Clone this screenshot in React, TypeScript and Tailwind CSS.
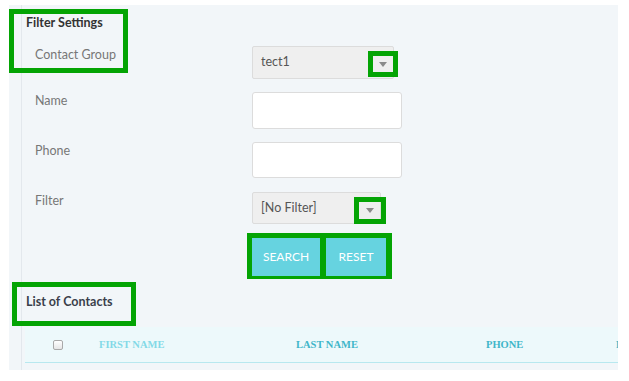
import React from 'react';

const GREEN = 'border-[#04a404]';

const Arrow: React.FC = () => (
  <span className="block w-0 h-0 border-l-[4px] border-r-[4px] border-t-[5px] border-l-transparent border-r-transparent border-t-[#8a8a8a]" />
);

const App: React.FC = () => {
  return (
    <div className="w-[629px] h-[381px] bg-white pt-[5px] pl-[9px] overflow-hidden" style={{ fontFamily: 'Lato, "Open Sans", sans-serif' }}>
      <div className="relative w-[609px] h-[365px] bg-[#f2f6f9] overflow-hidden">
        <div className="ml-[12px] h-full border-l border-[#e3e8ed]">
          {/* Filter settings */}
          <div className="pt-[10px] pl-[4px] text-[12.5px] leading-4 font-bold text-[#333]">Filter Settings</div>

          <div className="mt-[15px]">
            <div className="flex h-[46px]">
              <div className="w-[230px] pl-[13px] pt-[1px] text-[12.5px] leading-4 text-[#777]">Contact Group</div>
              <div className="relative w-[142px] h-[33px] bg-[#efefef] border border-[#dcdcdc] rounded-[2px] flex items-center pl-[8px] text-[12.5px] text-[#555]">
                tect1
                <div className={`absolute left-[115px] top-[4px] w-[30px] h-[26px] border-[5px] ${GREEN} flex items-center justify-center`}>
                  <Arrow />
                </div>
              </div>
            </div>

            <div className="flex h-[50px]">
              <div className="w-[230px] pl-[13px] pt-[1px] text-[12.5px] leading-4 text-[#777]">Name</div>
              <input className="w-[150px] h-[37px] bg-white border border-[#dcdcdc] rounded-[3px] outline-none" />
            </div>

            <div className="flex h-[50px]">
              <div className="w-[230px] pl-[13px] pt-[1px] text-[12.5px] leading-4 text-[#777]">Phone</div>
              <input className="w-[150px] h-[36px] bg-white border border-[#dcdcdc] rounded-[3px] outline-none" />
            </div>

            <div className="flex h-[41px]">
              <div className="w-[230px] pl-[13px] pt-[1px] text-[12.5px] leading-4 text-[#777]">Filter</div>
              <div className="relative w-[129px] h-[32px] bg-[#efefef] border border-[#dcdcdc] rounded-[2px] flex items-center pl-[8px] text-[12.5px] text-[#555]">
                [No Filter]
                <div className={`absolute left-[101px] top-[4px] w-[32px] h-[27px] border-[5px] ${GREEN} flex items-center justify-center`}>
                  <Arrow />
                </div>
              </div>
            </div>

            <div className="flex">
              <div className="w-[225px]" />
              <div className="flex gap-[6px] p-[5px] pb-[3px] pr-[6px] bg-[#04a404]">
                <button className="w-[68px] h-[38px] pb-[1px] bg-[#66d3e0] text-white text-[12px] uppercase">Search</button>
                <button className="w-[60px] h-[38px] pb-[1px] bg-[#66d3e0] text-white text-[12px] uppercase">Reset</button>
              </div>
            </div>
          </div>

          {/* List of contacts */}
          <div className="mt-[15px] pl-[4px] text-[12.5px] leading-4 font-bold text-[#3a3f4b]">List of Contacts</div>

          <div className="mt-[17px] ml-[3px] h-[36px] bg-[#edf9fb] border-b border-[#b8e8ef] flex items-center text-[10.5px] font-bold uppercase whitespace-nowrap" style={{ fontFamily: '"Liberation Serif", serif' }}>
            <div className="w-[74px] shrink-0 pl-[28px] flex items-center">
              <span className="block w-[10px] h-[10px] rounded-[2px] border border-[#a9a9a9] bg-gradient-to-b from-white to-[#e6e6e6]" />
            </div>
            <div className="w-[197px] shrink-0 text-[#83d9e7]">First Name</div>
            <div className="w-[190px] shrink-0 text-[#3fb6c9]">Last Name</div>
            <div className="w-[130px] shrink-0 text-[#3fb6c9]">Phone</div>
            <div className="shrink-0 text-[#3fb6c9]">Email</div>
          </div>
        </div>

        {/* annotation boxes */}
        <div className={`absolute left-0 top-[4px] w-[119px] h-[64px] border-[5px] ${GREEN}`} />
        <div className={`absolute left-[3px] top-[277px] w-[124px] h-[44px] border-[5px] ${GREEN}`} />
      </div>
    </div>
  );
};

export default App;
